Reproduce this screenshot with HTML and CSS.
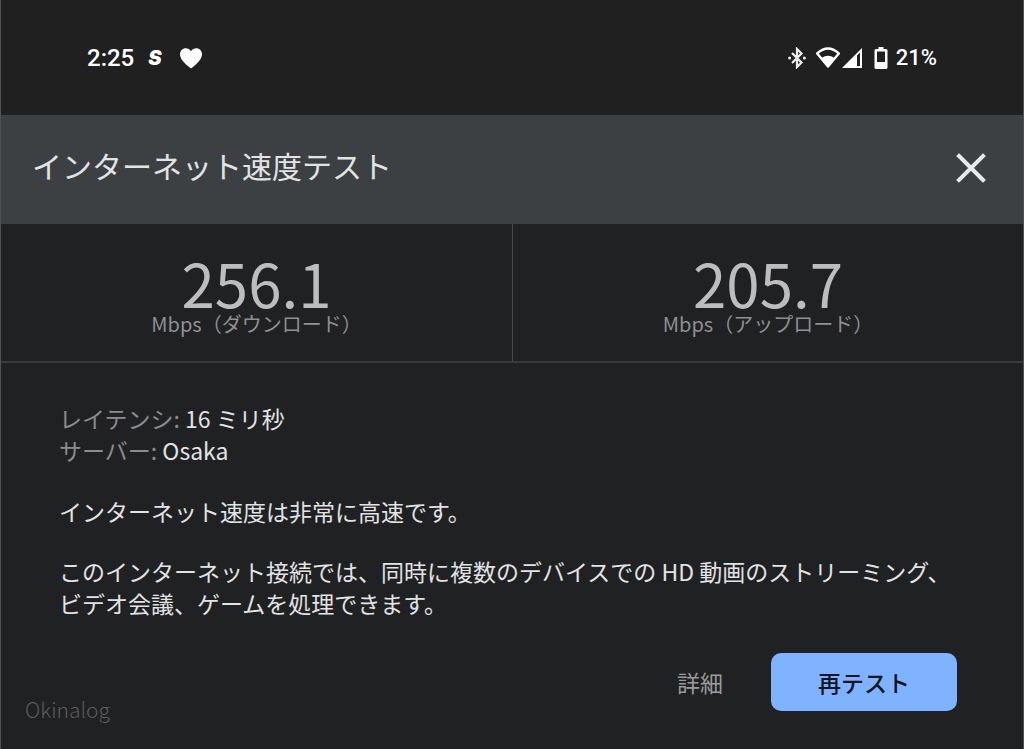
FILE: index.html
```
<!DOCTYPE html>
<html lang="ja">
<head>
  <meta charset="UTF-8">
  <meta name="viewport" content="width=device-width, initial-scale=1.0">
  <title>インターネット速度テスト</title>
  <link rel="stylesheet" href="styles.css">
</head>
<body>
  <div class="status-bar">
    <div class="status-left">
      <span class="time">2:25</span>
      <span class="app-mark">S</span>
      <svg class="heart" width="24" height="22" viewBox="0 0 24 22" fill="#fff">
        <path d="M12 21.500C8 18.500 1 13 1 7.300C1 3.700 3.500 1.200 6.700 1.200C8.900 1.200 10.900 2.300 12 4.200C13.100 2.300 15.100 1.200 17.300 1.200C20.500 1.200 23 3.700 23 7.300C23 13 16 18.500 12 21.500Z"/>
      </svg>
    </div>
    <div class="status-right">
      <svg class="bluetooth" width="18" height="22" viewBox="0 0 18 22">
        <path d="M4 6L13.500 15.500L9 20V2L13.500 6.500L4 16" fill="none" stroke="#eee" stroke-width="2.200"/>
        <circle cx="1.600" cy="11" r="1.500" fill="#eee"/>
        <circle cx="16.400" cy="11" r="1.500" fill="#eee"/>
      </svg>
      <svg class="wifi" width="26" height="22" viewBox="0 0 26 22">
        <path d="M2.200 6.500Q13-3.500 23.800 6.500L13 19.500Z" fill="none" stroke="#fff" stroke-width="2.400" stroke-linejoin="round"/>
        <path d="M6.500 11Q13 6.500 19.500 11L13 19.500Z" fill="#fff"/>
      </svg>
      <svg class="signal" width="20" height="22" viewBox="0 0 20 22">
        <path fill="#fff" fill-rule="evenodd" d="M0 21L20 1V21ZM15 8.500V19H18V5.500Z"/>
      </svg>
      <svg class="battery" width="14" height="22" viewBox="0 0 14 22">
        <path fill="#fff" fill-rule="evenodd" d="M4.500 0H9.500V2H12Q13.500 2 13.500 3.500V20.500Q13.500 22 12 22H2Q.5 22 .5 20.500V3.500Q.5 2 2 2H4.500ZM3 4.500V15H11V4.500Z"/>
      </svg>
      <span class="percent">21%</span>
    </div>
  </div>

  <main class="card">
    <header class="card-header">
      <h1>インターネット速度テスト</h1>
      <button class="close" aria-label="閉じる">
        <svg width="30" height="30" viewBox="0 0 30 30">
          <path d="M3 3L27 27M27 3L3 27" stroke="#e8eaed" stroke-width="4" stroke-linecap="square"/>
        </svg>
      </button>
    </header>

    <section class="results">
      <div class="result">
        <div class="value">256.1</div>
        <div class="unit">Mbps（ダウンロード）</div>
      </div>
      <div class="result">
        <div class="value">205.7</div>
        <div class="unit">Mbps（アップロード）</div>
      </div>
    </section>

    <section class="details">
      <p><span class="label">レイテンシ:</span> 16 ミリ秒<br>
      <span class="label">サーバー:</span> Osaka</p>
      <p>インターネット速度は非常に高速です。</p>
      <p>このインターネット接続では、同時に複数のデバイスでの HD 動画のストリーミング、ビデオ会議、ゲームを処理できます。</p>
    </section>

    <footer class="card-footer">
      <span class="credit">Okinalog</span>
      <div class="actions">
        <button class="more">詳細</button>
        <button class="retest">再テスト</button>
      </div>
    </footer>
  </main>
</body>
</html>
```
FILE: styles.css
```
* {
  box-sizing: border-box;
}

body {
  margin: 0;
  min-height: 100vh;
  display: flex;
  flex-direction: column;
  background-color: #202122;
  border-left: 1px solid #505355;
  border-right: 1px solid #505355;
  color: #e2e3e5;
  font-family: "Noto Sans CJK JP", sans-serif;
  font-size: 23px;
  line-height: 32px;
}

button {
  padding: 0;
  border: none;
  background: none;
  font-family: inherit;
  font-size: 23px;
  cursor: pointer;
}

svg {
  display: block;
}

.status-bar {
  height: 115px;
  padding: 0 86px;
  display: flex;
  justify-content: space-between;
  align-items: center;
  background-color: #202020;
  color: #fff;
  font-family: Roboto, sans-serif;
  font-size: 24px;
  font-weight: 500;
}

.status-left,
.status-right {
  display: flex;
  align-items: center;
}

.app-mark {
  margin: 0 17px 0 14px;
  font-family: Inter, sans-serif;
  font-size: 20px;
  font-weight: 900;
  font-style: italic;
}

.wifi {
  margin-left: 9px;
}

.signal {
  margin-left: 1px;
}

.battery {
  margin: 0 8px 0 12px;
}

.percent {
  font-size: 22px;
}

.card {
  flex: 1;
  display: flex;
  flex-direction: column;
}

.card-header {
  height: 109px;
  padding: 0 37px 4px 31px;
  display: flex;
  justify-content: space-between;
  align-items: center;
  background-color: #3c4043;
}

.card-header h1 {
  margin: 0;
  padding-bottom: 6px;
  font-size: 30px;
  font-weight: 400;
  line-height: 44px;
}

.results {
  display: grid;
  grid-template-columns: 1fr 1fr;
  border-bottom: 2px solid #38393b;
}

.result {
  padding: 28px 0 25px;
  text-align: center;
}

.result + .result {
  border-left: 1px solid #48494b;
}

.value {
  color: #bdbdbf;
  font-size: 60px;
  line-height: 60px;
}

.unit {
  color: #8f9092;
  font-size: 20px;
  line-height: 24px;
}

.details {
  padding: 39px 58px 0;
}

.details p {
  margin: 0 0 28px;
}

.details p:first-child {
  margin-bottom: 29px;
}

.label {
  color: #8b8c8e;
}

.card-footer {
  padding: 6px 66px 36px 24px;
  display: flex;
  justify-content: space-between;
  align-items: flex-end;
}

.credit {
  color: #5b5c5e;
  font-size: 21px;
  font-weight: 300;
  line-height: 24px;
  margin-bottom: -10px;
}

.actions {
  display: flex;
  align-items: center;
  gap: 48px;
}

.more {
  color: #9a9b9d;
}

.retest {
  padding: 12px 47px;
  border-radius: 10px;
  background-color: #80b3ff;
  color: #10151f;
  font-weight: 500;
}
```
